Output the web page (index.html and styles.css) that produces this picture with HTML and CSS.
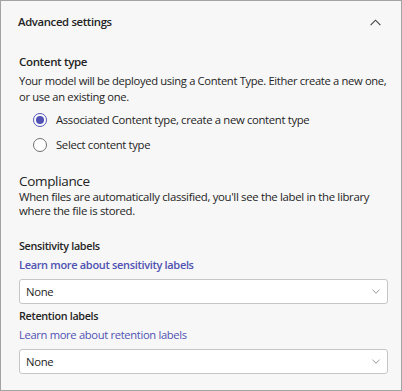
FILE: index.html
```html
<!DOCTYPE html>
<html lang="en">
<head>
<meta charset="utf-8">
<title>Advanced settings</title>
<link rel="stylesheet" href="styles.css">
</head>
<body>
<section class="panel">
  <header class="panel-head">
    <h2 class="panel-title">Advanced settings</h2>
    <svg class="chev-up" width="11" height="7" viewBox="0 0 11 7" aria-hidden="true"><path d="M0.6 6.1 L5.5 1.2 L10.4 6.1" fill="none" stroke="#424242" stroke-width="1.1"/></svg>
  </header>
  <div class="panel-body">
    <h3 class="label-strong">Content type</h3>
    <p class="desc">Your model will be deployed using a Content Type. Either create a new one, or use an existing one.</p>
    <div class="radios">
      <label class="radio"><span class="dot checked"></span>Associated Content type, create a new content type</label>
      <label class="radio"><span class="dot"></span>Select content type</label>
    </div>
    <h3 class="section-title">Compliance</h3>
    <p class="desc small">When files are automatically classified, you'll see the label in the library where the file is stored.</p>
    <h4 class="field-label first">Sensitivity labels</h4>
    <a class="link strong">Learn more about sensitivity labels</a>
    <div class="select"><span>None</span><svg width="8" height="5" viewBox="0 0 8 5" aria-hidden="true"><path d="M0.5 0.8 L4 4.2 L7.5 0.8" fill="none" stroke="#8a8a8a" stroke-width="0.9"/></svg></div>
    <h4 class="field-label">Retention labels</h4>
    <a class="link">Learn more about retention labels</a>
    <div class="select"><span>None</span><svg width="8" height="5" viewBox="0 0 8 5" aria-hidden="true"><path d="M0.5 0.8 L4 4.2 L7.5 0.8" fill="none" stroke="#8a8a8a" stroke-width="0.9"/></svg></div>
  </div>
</section>
</body>
</html>
```
FILE: styles.css
```css
* { box-sizing: border-box; }
html, body { margin: 0; padding: 0; background: #ffffff; }
body { font-family: "Open Sans", "Noto Sans", sans-serif; color: #242424; letter-spacing: -0.33px; }
.panel {
  width: 402px;
  height: 391px;
  border: 1px solid #a3a3a3;
  background: #f7f7f7;
  overflow: hidden;
}
.panel-head {
  display: flex;
  align-items: center;
  justify-content: space-between;
  height: 42px;
  padding: 0 20px 0 17px;
}
.panel-title {
  margin: 0;
  font-size: 11.3px;
  font-weight: 600;
  line-height: 16px;
}
.panel-body { padding: 11px 13px 0 18px; }
.label-strong {
  margin: 0;
  font-size: 11.5px;
  font-weight: 600;
  line-height: 16px;
}
.desc {
  margin: 3px 0 0;
  font-size: 11.2px;
  line-height: 16px;
}
.desc.small { font-size: 11.4px; line-height: 14px; margin-top: 0; }
.radios { display: flex; flex-direction: column; gap: 11px; margin-top: 8px; padding-left: 14px; }
.radio { display: flex; align-items: center; gap: 9px; font-size: 11.3px; line-height: 14px; }
.dot {
  width: 14px; height: 14px; border-radius: 50%;
  border: 1px solid #707070; background: #fff; flex: none;
  position: relative;
}
.dot.checked { border-color: #4f52b2; }
.dot.checked::after {
  content: ""; position: absolute; left: 2px; top: 2px; width: 8px; height: 8px; border-radius: 50%; background: #4f52b2;
}
.section-title { margin: 20px 0 0; font-size: 13.5px; font-weight: 400; line-height: 18px; }
.field-label { margin: 20px 0 0; font-size: 10.8px; font-weight: 600; line-height: 16px; }
.field-label:not(.first) { margin-top: 4px; }
.link { display: block; margin-top: 3px; color: #4f52b2; font-size: 11.2px; line-height: 16px; }
.link.strong { font-weight: 600; font-size: 11px; }
.select {
  margin-top: 6px;
  height: 25px;
  width: 369px;
  background: #fff;
  border: 1px solid #c6c6c6;
  border-radius: 3px;
  display: flex;
  align-items: center;
  justify-content: space-between;
  padding: 0 7px 0 6px;
  font-size: 11.3px;
}
```
